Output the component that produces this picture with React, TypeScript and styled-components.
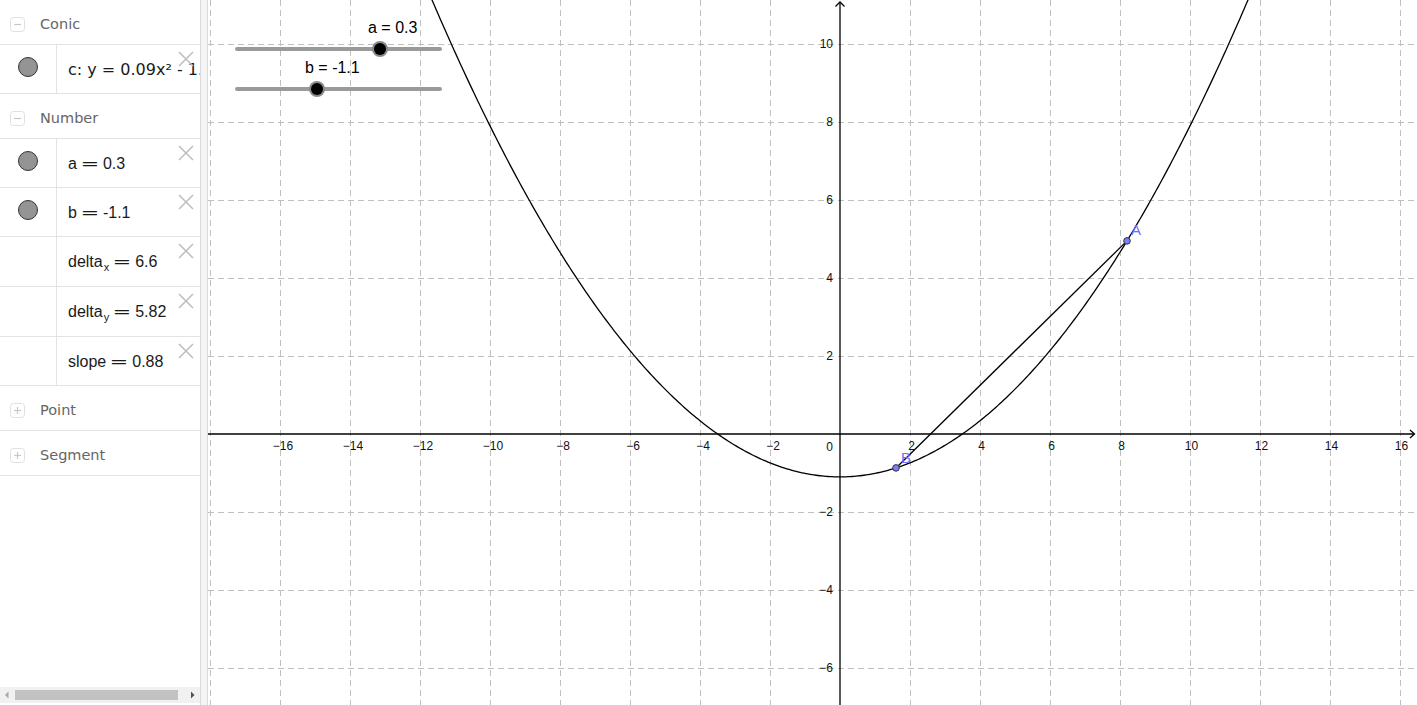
import React from "react";
import styled, { createGlobalStyle } from "styled-components";

const GlobalStyle = createGlobalStyle`
  html, body { margin: 0; padding: 0; overflow: hidden; background: #fff; }
  body { font-family: "DejaVu Sans", "Liberation Sans", sans-serif; }
  #root { width: 100vw; height: 100vh; }
`;

const Page = styled.div`
  display: flex;
  width: 100vw;
  height: 100vh;
`;

const AlgebraPanel = styled.aside`
  width: 200px;
  flex-shrink: 0;
  display: flex;
  flex-direction: column;
  background: #fff;
  overflow: hidden;
`;

const ItemList = styled.div`
  display: flex;
  flex-direction: column;
`;

const GroupHeader = styled.div`
  height: 45px;
  box-sizing: border-box;
  border-bottom: 1px solid #e3e3e3;
  display: flex;
  align-items: center;
  gap: 15px;
  padding: 4px 0 0 10px;
  color: #666;
  font-size: 14.5px;
`;

const ToggleIcon = styled.svg`
  width: 15px;
  height: 15px;
  flex-shrink: 0;
  display: block;
`;

const ValueRow = styled.div<{ $h: number }>`
  position: relative;
  height: ${(p) => p.$h}px;
  box-sizing: border-box;
  border-bottom: 1px solid #e3e3e3;
  display: flex;
  overflow: hidden;
`;

const MarbleCell = styled.div`
  width: 57px;
  flex-shrink: 0;
  box-sizing: border-box;
  border-right: 1px solid #e3e3e3;
  display: flex;
  justify-content: center;
  align-items: flex-start;
  padding-top: 12px;
`;

const Marble = styled.div`
  width: 20px;
  height: 20px;
  box-sizing: border-box;
  border-radius: 50%;
  border: 1.5px solid #333;
  background: #949494;
`;

const ValueText = styled.div<{ $math?: boolean }>`
  padding: 15px 0 0 11px;
  line-height: 20px;
  font-size: 16px;
  font-family: ${(p) =>
    p.$math ? '"Liberation Sans", Arial, sans-serif' : '"DejaVu Sans", sans-serif'};
  color: #1a1a1a;
  white-space: nowrap;
`;

const Eq = styled.span`
  display: inline-block;
  width: 26px;
  text-align: center;
  font-family: "DejaVu Sans", sans-serif;
  transform: scaleX(1.4);
`;

const Sub = styled.span`
  font-size: 11px;
  position: relative;
  top: 4px;
  margin-left: 1px;
`;

const DeleteIcon = styled.svg`
  position: absolute;
  top: 6px;
  right: 6px;
  width: 16px;
  height: 16px;
`;

const Scrollbar = styled.div`
  margin-top: auto;
  margin-bottom: 2px;
  height: 16px;
  background: #f1f1f1;
  display: flex;
  align-items: center;
`;

const ScrollArrow = styled.svg`
  width: 15px;
  height: 16px;
  flex-shrink: 0;
  display: block;
`;

const ScrollThumb = styled.div`
  width: 163px;
  height: 10px;
  background: #c2c2c2;
  flex-shrink: 0;
`;

const ScrollGap = styled.div`
  flex: 1;
`;

const Splitter = styled.div`
  width: 8px;
  flex-shrink: 0;
  box-sizing: border-box;
  border-left: 1px solid #dadada;
  border-right: 1px solid #dadada;
  background: #f4f4f4;
`;

const Graphics = styled.main`
  flex: 1;
  position: relative;
  overflow: hidden;
  background: #fff;
`;

const Canvas = styled.svg`
  display: block;
  width: 1209px;
  height: 705px;
`;

const Toggle = ({ open }: { open: boolean }) => (
  <ToggleIcon viewBox="0 0 15 15">
    <rect x="0.5" y="0.5" width="14" height="14" rx="3" fill="#fff" stroke="#e0e0e0" />
    <path d="M4 7.5 H11" stroke="#c8c8c8" strokeWidth="1.2" />
    {!open && <path d="M7.5 4 V11" stroke="#c8c8c8" strokeWidth="1.2" />}
  </ToggleIcon>
);

const Delete = () => (
  <DeleteIcon viewBox="0 0 16 16">
    <path d="M1 1 L15 15 M15 1 L1 15" stroke="#bdbdbd" strokeWidth="1.5" fill="none" />
  </DeleteIcon>
);

type Item = { marble: boolean; h: number; math: boolean; content: React.ReactNode };

const groups: { name: string; open: boolean; items: Item[] }[] = [
  {
    name: "Conic",
    open: true,
    items: [{ marble: true, h: 49, math: false, content: <>c: y = 0.09x² - 1.1</> }],
  },
  {
    name: "Number",
    open: true,
    items: [
      { marble: true, h: 49, math: true, content: <>a<Eq>=</Eq>0.3</> },
      { marble: true, h: 49, math: true, content: <>b<Eq>=</Eq>-1.1</> },
      { marble: false, h: 50, math: true, content: <>delta<Sub>x</Sub><Eq>=</Eq>6.6</> },
      { marble: false, h: 50, math: true, content: <>delta<Sub>y</Sub><Eq>=</Eq>5.82</> },
      { marble: false, h: 49, math: true, content: <>slope<Eq>=</Eq>0.88</> },
    ],
  },
  { name: "Point", open: false, items: [] },
  { name: "Segment", open: false, items: [] },
];

const OX = 840;
const OY = 434;
const SX = 35;
const SY = 39;
const px = (x: number) => OX + x * SX;
const py = (y: number) => OY - y * SY;
const fmt = (n: number) => (n < 0 ? "\u2212" + Math.abs(n) : String(n));

const a = 0.3;
const b = -1.1;
const f = (x: number) => a * a * x * x + b;

const parabola = (() => {
  const pts: string[] = [];
  for (let X = 380; X <= 1300; X += 2) {
    const x = (X - OX) / SX;
    pts.push(`${X},${py(f(x)).toFixed(2)}`);
  }
  return "M" + pts.join(" L");
})();

const A = { x: 8.2, y: f(8.2) };
const B = { x: 1.6, y: f(1.6) };

const xTicks: number[] = [];
for (let k = -18; k <= 16; k += 2) xTicks.push(k);
const yTicks: number[] = [];
for (let k = -6; k <= 10; k += 2) yTicks.push(k);

const Slider = ({ label, y, knob }: { label: string; y: number; knob: number }) => (
  <g>
    <line x1={237} y1={y} x2={440} y2={y} stroke="#9a9a9a" strokeWidth={4} strokeLinecap="round" />
    <circle cx={knob} cy={y} r={8} fill="#8a8a8a" />
    <circle cx={knob} cy={y} r={6} fill="#000" />
    <text x={knob - 12} y={y - 16} fontFamily="Liberation Sans, Arial, sans-serif" fontSize={16} fill="#000">
      {label}
    </text>
  </g>
);

const Graph = () => (
  <Canvas viewBox="208 0 1209 705">
    <g stroke="#c0c0c0" strokeWidth={1} strokeDasharray="6 4">
      {xTicks
        .filter((k) => k !== 0)
        .map((k) => (
          <line key={"gx" + k} x1={px(k) + 0.5} y1={0} x2={px(k) + 0.5} y2={705} />
        ))}
      {yTicks
        .filter((k) => k !== 0)
        .map((k) => (
          <line key={"gy" + k} x1={208} y1={py(k) + 0.5} x2={1417} y2={py(k) + 0.5} />
        ))}
    </g>
    <g stroke="#000" strokeWidth={1.3} fill="none">
      <line x1={208} y1={OY} x2={1414} y2={OY} />
      <path d={`M1410 ${OY - 4} L1414.5 ${OY} L1410 ${OY + 4}`} />
      <line x1={OX} y1={2} x2={OX} y2={705} />
      <path d={`M${OX - 4.5} 6.5 L${OX} 2 L${OX + 4.5} 6.5`} />
    </g>
    <g fontFamily="Liberation Sans, Arial, sans-serif" fontSize={12} fill="#111">
      {xTicks
        .filter((k) => k !== 0 && k !== -18)
        .map((k) => (
          <text key={"lx" + k} x={px(k) + (k < 0 ? 3 : 1.5)} y={450} textAnchor="middle">
            {fmt(k)}
          </text>
        ))}
      {yTicks
        .filter((k) => k !== 0)
        .map((k) => (
          <text key={"ly" + k} x={833} y={py(k) + 4} textAnchor="end">
            {fmt(k)}
          </text>
        ))}
      <text x={833} y={451} textAnchor="end">
        0
      </text>
    </g>
    <path d={parabola} stroke="#000" strokeWidth={1.3} fill="none" />
    <line x1={px(B.x)} y1={py(B.y)} x2={px(A.x)} y2={py(A.y)} stroke="#000" strokeWidth={1.3} />
    <g fontFamily="Liberation Sans, Arial, sans-serif" fontSize={15} fill="#6e6eff">
      <text x={px(A.x) + 4} y={py(A.y) - 6}>A</text>
      <text x={px(B.x) + 5} y={py(B.y) - 5}>B</text>
    </g>
    <circle cx={px(A.x)} cy={py(A.y)} r={3.3} fill="#7d7dff" stroke="#333" strokeWidth={1} />
    <circle cx={px(B.x)} cy={py(B.y)} r={3.3} fill="#7d7dff" stroke="#333" strokeWidth={1} />
    <Slider label="a = 0.3" y={49} knob={380} />
    <Slider label="b = -1.1" y={89} knob={317} />
  </Canvas>
);

export default function App() {
  return (
    <>
      <GlobalStyle />
      <Page>
        <AlgebraPanel>
          <ItemList>
            {groups.map((g) => (
              <React.Fragment key={g.name}>
                <GroupHeader>
                  <Toggle open={g.open} />
                  {g.name}
                </GroupHeader>
                {g.items.map((it, i) => (
                  <ValueRow key={i} $h={it.h}>
                    <MarbleCell>{it.marble && <Marble />}</MarbleCell>
                    <ValueText $math={it.math}>{it.content}</ValueText>
                    <Delete />
                  </ValueRow>
                ))}
              </React.Fragment>
            ))}
          </ItemList>
          <Scrollbar>
            <ScrollArrow viewBox="0 0 15 16">
              <path d="M5 8 L8.5 4.5 L8.5 11.5 Z" fill="#a8a8a8" />
            </ScrollArrow>
            <ScrollThumb />
            <ScrollGap />
            <ScrollArrow viewBox="0 0 15 16">
              <path d="M9.5 8 L6 4.5 L6 11.5 Z" fill="#505050" />
            </ScrollArrow>
          </Scrollbar>
        </AlgebraPanel>
        <Splitter />
        <Graphics>
          <Graph />
        </Graphics>
      </Page>
    </>
  );
}
